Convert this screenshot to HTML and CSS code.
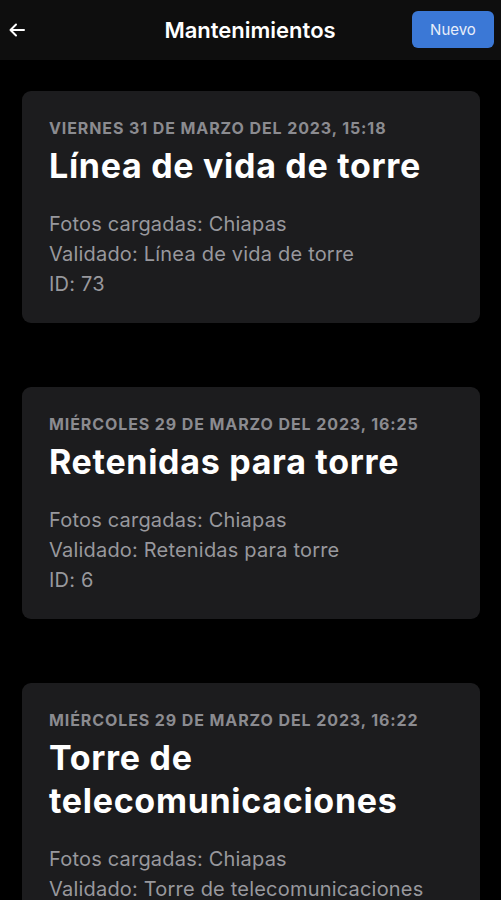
FILE: index.html
```html
<!DOCTYPE html>
<html lang="es">
<head>
  <meta charset="UTF-8">
  <title>Mantenimientos</title>
  <link rel="stylesheet" href="styles.css">
</head>
<body>

<div class="topbar">
  <button class="back" aria-label="Volver">
    <svg width="18" height="18" viewBox="0 0 18 18" fill="none" stroke="#fff" stroke-width="2" stroke-linecap="round" stroke-linejoin="round">
      <path d="M16 9H2.5M8 3.5L2.5 9L8 14.5"/>
    </svg>
  </button>
  <h1>Mantenimientos</h1>
  <button class="new-btn">Nuevo</button>
</div>

<div class="list">
  <div class="card">
    <div class="date">Viernes 31 de marzo del 2023, 15:18</div>
    <h2>Línea de vida de torre</h2>
    <div class="info">
      <p>Fotos cargadas: Chiapas</p>
      <p>Validado: Línea de vida de torre</p>
      <p>ID: 73</p>
    </div>
  </div>

  <div class="card">
    <div class="date">Miércoles 29 de marzo del 2023, 16:25</div>
    <h2>Retenidas para torre</h2>
    <div class="info">
      <p>Fotos cargadas: Chiapas</p>
      <p>Validado: Retenidas para torre</p>
      <p>ID: 6</p>
    </div>
  </div>

  <div class="card">
    <div class="date">Miércoles 29 de marzo del 2023, 16:22</div>
    <h2>Torre de telecomunicaciones</h2>
    <div class="info">
      <p>Fotos cargadas: Chiapas</p>
      <p>Validado: Torre de telecomunicaciones</p>
      <p>ID: 5</p>
    </div>
  </div>
</div>

</body>
</html>
```

FILE: styles.css
```css
body {
  margin: 0;
  background-color: #000;
  color: #fff;
  font-family: Inter, "Liberation Sans", sans-serif;
  overflow: hidden;
}
.topbar {
  height: 60px;
  background-color: #0e0e0e;
  display: grid;
  grid-template-columns: 1fr auto 1fr;
  align-items: center;
  padding: 0 7px 0 6px;
}
.back {
  justify-self: start;
  background: none;
  border: 0;
  padding: 2px;
  display: flex;
  cursor: pointer;
}
.topbar h1 {
  margin: 0;
  font-size: 22px;
  font-weight: 600;
}
.new-btn {
  justify-self: end;
  width: 82px;
  height: 37px;
  margin-top: -1px;
  border: 0;
  border-radius: 6px;
  background-color: #3b78d6;
  color: #e8eefa;
  font-family: inherit;
  font-size: 15px;
  cursor: pointer;
}
.list {
  padding: 31px 21px 0 22px;
  display: flex;
  flex-direction: column;
  gap: 64px;
}
.card {
  background-color: #1c1c1e;
  border-radius: 9px;
  padding: 28px 27px 24px;
}
.date {
  font-size: 16px;
  font-weight: 700;
  text-transform: uppercase;
  letter-spacing: 0.9px;
  color: #8b8b90;
  line-height: 18px;
}
.card h2 {
  margin: 7px 0 0;
  font-size: 34px;
  font-weight: 700;
  line-height: 43px;
  letter-spacing: 0.7px;
}
.info {
  margin-top: 22px;
  color: #98989d;
  font-size: 20px;
  line-height: 30px;
  letter-spacing: 0.2px;
}
.info p {
  margin: 0;
}
```
